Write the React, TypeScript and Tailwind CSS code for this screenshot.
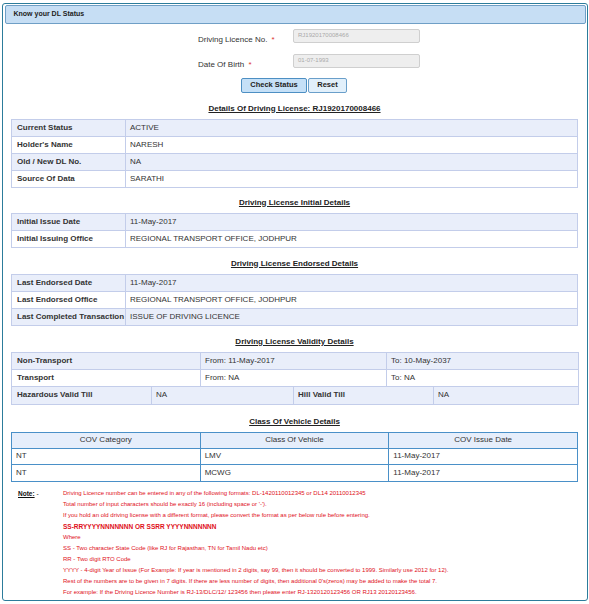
import React from "react";

const F = "font-['Liberation_Sans',Arial,sans-serif]";

function Title({ children, h }: { children: React.ReactNode; h: 25 | 26 | 27 }) {
  const cls =
    h === 25
      ? "w-[567px] h-[25px] pt-[10px] flex justify-center"
      : h === 26
      ? "w-[567px] h-[26px] pt-[11px] flex justify-center"
      : "w-[567px] h-[27px] pt-[12px] flex justify-center";
  return (
    <div className={cls}>
      <span className="text-[8px] leading-[10px] font-bold underline text-[#222]">{children}</span>
    </div>
  );
}

function KVTable({ rows }: { rows: [string, string][] }) {
  return (
    <table className="w-[567px] border-collapse border border-[#c3cdea] text-[8px]">
      <tbody>
        {rows.map(([k, v], i) => (
          <tr key={k} className={i % 2 === 0 ? "bg-[#e9eefa] h-[17px]" : "bg-white h-[17px]"}>
            <td className="w-[114px] border border-[#c3cdea] pl-[5px] font-bold text-[#333] leading-[10px] py-0">{k}</td>
            <td className="border border-[#c3cdea] pl-[4px] text-[#333] leading-[10px] py-0">{v}</td>
          </tr>
        ))}
      </tbody>
    </table>
  );
}

export default function App() {
  const notes: { t: string; b?: boolean }[] = [
    { t: "Driving Licence number can be entered in any of the following formats: DL-1420110012345 or DL14 20110012345" },
    { t: "Total number of input characters should be exactly 16 (including space or '-')." },
    { t: "If you hold an old driving license with a different format, please convert the format as per below rule before entering." },
    { t: "SS-RRYYYYNNNNNNN OR SSRR YYYYNNNNNNN", b: true },
    { t: "Where" },
    { t: "SS - Two character State Code (like RJ for Rajasthan, TN for Tamil Nadu etc)" },
    { t: "RR - Two digit RTO Code" },
    { t: "YYYY - 4-digit Year of Issue (For Example: If year is mentioned in 2 digits, say 99, then it should be converted to 1999. Similarly use 2012 for 12)." },
    { t: "Rest of the numbers are to be given in 7 digits. If there are less number of digits, then additional 0's(zeros) may be added to make the total 7." },
    { t: "For example: If the Driving Licence Number is RJ-13/DLC/12/ 123456 then please enter RJ-1320120123456 OR RJ13 20120123456." },
  ];
  const cell = "border border-[#c3cdea] leading-[10px] py-0 text-[#333]";
  const cov = "border border-[#4a90c8] leading-[10px] py-0 text-[#333]";
  return (
    <div className={`${F} w-[589px] h-[604px] bg-white pt-[3px] pl-[2px] pr-[1px] pb-[3px]`}>
      <div className="w-[586px] h-[598px] border-[1.5px] border-[#2c7c9b] rounded-[3px] flex flex-col px-[1px] pt-[0.5px]">
        <div className="h-[19px] mx-[0.5px] bg-[#c6def4] border border-[#6f9fc6] rounded-[2px] flex items-center pl-[8px]">
          <span className="text-[7px] font-bold text-[#222]">Know your DL Status</span>
        </div>
        <div className="grid grid-cols-[95px_127px] grid-rows-[14px_14px] gap-y-[11px] mt-[5px] ml-[194px]">
          <div className="text-[8px] text-[#333] leading-[10px] pt-[6px] whitespace-nowrap">
            Driving Licence No. <span className="text-[#d33] ml-[2px]">*</span>
          </div>
          <div className="bg-[#eeeeee] border border-[#cfcfcf] rounded-[2px] text-[6px] text-[#aaa] pl-[4px] flex items-center">
            RJ1920170008466
          </div>
          <div className="text-[8px] text-[#333] leading-[10px] pt-[6px] whitespace-nowrap">
            Date Of Birth <span className="text-[#d33] ml-[2px]">*</span>
          </div>
          <div className="bg-[#eeeeee] border border-[#cfcfcf] rounded-[2px] text-[6px] text-[#aaa] pl-[4px] flex items-center">
            01-07-1993
          </div>
        </div>
        <div className="flex mt-[10px] ml-[237px]">
          <button className="h-[15px] w-[66px] bg-[#c5e0f7] border border-[#4d8fc3] rounded-[2px] text-[7.5px] font-bold text-[#222] leading-none">
            Check Status
          </button>
          <button className="h-[15px] w-[39px] ml-[1px] bg-[#e2f0fb] border border-[#6a9fca] rounded-[2px] text-[7.5px] font-bold text-[#222] leading-none">
            Reset
          </button>
        </div>
        <div className="pl-[7px] flex flex-col">
          <Title h={26}>Details Of Driving License: RJ1920170008466</Title>
          <KVTable rows={[["Current Status", "ACTIVE"], ["Holder's Name", "NARESH"], ["Old / New DL No.", "NA"], ["Source Of Data", "SARATHI"]]} />
          <Title h={25}>Driving License Initial Details</Title>
          <KVTable rows={[["Initial Issue Date", "11-May-2017"], ["Initial Issuing Office", "REGIONAL TRANSPORT OFFICE, JODHPUR"]]} />
          <Title h={26}>Driving License Endorsed Details</Title>
          <KVTable rows={[["Last Endorsed Date", "11-May-2017"], ["Last Endorsed Office", "REGIONAL TRANSPORT OFFICE, JODHPUR"], ["Last Completed Transaction", "ISSUE OF DRIVING LICENCE"]]} />
          <Title h={26}>Driving License Validity Details</Title>
          <table className="w-[567px] border-collapse border border-[#c3cdea] text-[8px] table-fixed">
            <colgroup>
              <col className="w-[140px]" />
              <col className="w-[49px]" />
              <col className="w-[93px]" />
              <col className="w-[93px]" />
              <col className="w-[47px]" />
              <col className="w-[145px]" />
            </colgroup>
            <tbody>
              <tr className="bg-[#e9eefa] h-[17px]">
                <td colSpan={2} className={`${cell} pl-[5px] font-bold`}>Non-Transport</td>
                <td colSpan={2} className={`${cell} pl-[4px]`}>From: 11-May-2017</td>
                <td colSpan={2} className={`${cell} pl-[4px]`}>To: 10-May-2037</td>
              </tr>
              <tr className="bg-white h-[17px]">
                <td colSpan={2} className={`${cell} pl-[5px] font-bold`}>Transport</td>
                <td colSpan={2} className={`${cell} pl-[4px]`}>From: NA</td>
                <td colSpan={2} className={`${cell} pl-[4px]`}>To: NA</td>
              </tr>
              <tr className="bg-[#e9eefa] h-[18px]">
                <td className={`${cell} pl-[5px] font-bold`}>Hazardous Valid Till</td>
                <td colSpan={2} className={`${cell} pl-[4px]`}>NA</td>
                <td colSpan={2} className={`${cell} pl-[4px] font-bold`}>Hill Valid Till</td>
                <td className={`${cell} pl-[4px]`}>NA</td>
              </tr>
            </tbody>
          </table>
          <Title h={27}>Class Of Vehicle Details</Title>
          <table className="w-[567px] border-collapse border border-[#4a90c8] text-[8px] table-fixed">
            <tbody>
              <tr className="bg-[#e6eefb] h-[16px]">
                <td className={`${cov} text-center`}>COV Category</td>
                <td className={`${cov} text-center`}>Class Of Vehicle</td>
                <td className={`${cov} text-center`}>COV Issue Date</td>
              </tr>
              <tr className="bg-white h-[16px]">
                <td className={`${cov} pl-[4px]`}>NT</td>
                <td className={`${cov} pl-[4px]`}>LMV</td>
                <td className={`${cov} pl-[4px]`}>11-May-2017</td>
              </tr>
              <tr className="bg-white h-[17px]">
                <td className={`${cov} pl-[4px]`}>NT</td>
                <td className={`${cov} pl-[4px]`}>MCWG</td>
                <td className={`${cov} pl-[4px]`}>11-May-2017</td>
              </tr>
            </tbody>
          </table>
          <div className="flex mt-[6px] pl-[7px]">
            <div className="w-[45px] text-[6.5px] leading-[11px] text-[#111] shrink-0">
              <span className="font-bold underline">Note:</span> -
            </div>
            <div className="flex flex-col text-[6px] leading-[11px] text-[#e0101a]">
              {notes.map((n) => (
                <div key={n.t} className={n.b ? "font-bold text-[6.5px]" : ""}>{n.t}</div>
              ))}
            </div>
          </div>
        </div>
      </div>
    </div>
  );
}
